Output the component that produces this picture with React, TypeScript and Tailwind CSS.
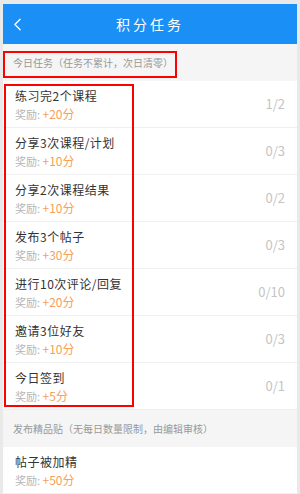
import { ChevronLeft } from "lucide-react";

const tasks = [
  { title: "练习完2个课程", reward: 20, progress: "1/2" },
  { title: "分享3次课程/计划", reward: 10, progress: "0/3" },
  { title: "分享2次课程结果", reward: 10, progress: "0/2" },
  { title: "发布3个帖子", reward: 30, progress: "0/3" },
  { title: "进行10次评论/回复", reward: 20, progress: "0/10" },
  { title: "邀请3位好友", reward: 10, progress: "0/3" },
  { title: "今日签到", reward: 5, progress: "0/1" },
];

const font = { fontFamily: '"Noto Sans CJK SC", "Liberation Sans", sans-serif' };

function TaskRow({ title, reward, progress }: { title: string; reward: number; progress?: string }) {
  return (
    <div className="flex h-[47px] items-center justify-between border-b border-[#f0f0f0] pl-[12px] pr-[12px]">
      <div className="flex flex-col">
        <span className="text-[12px] leading-[18px] tracking-[0.5px] text-[#333]">{title}</span>
        <span className="mt-[1px] text-[11px] leading-[16px] text-[#b5b5b5]">
          奖励: <span className="text-[12px] text-[#f7a05a]">+{reward}分</span>
        </span>
      </div>
      {progress && <span className="text-[13px] text-[#c4c4c4]">{progress}</span>}
    </div>
  );
}

export default function App() {
  return (
    <div className="relative h-[494px] w-[300px] overflow-hidden bg-[#e9e9e9] px-[3px] pt-[4px]" style={font}>
      <div className="bg-white">
        <div className="relative flex h-[40px] items-center justify-center bg-[#1a8ff5]">
          <ChevronLeft className="absolute left-[4px] top-[10px] h-[21px] w-[21px] text-white" strokeWidth={1.5} />
          <span className="text-[14px] tracking-[3px] text-white">积分任务</span>
        </div>
        <div className="flex h-[37px] items-center bg-[#f5f5f5] pl-[10px] text-[10px] text-[#999]">
          今日任务（任务不累计，次日清零）
        </div>
        {tasks.map((t) => (
          <TaskRow key={t.title} {...t} />
        ))}
        <div className="flex h-[37px] items-center bg-[#f5f5f5] pl-[10px] text-[10px] text-[#999]">
          发布精品贴（无每日数量限制，由编辑审核）
        </div>
        <TaskRow title="帖子被加精" reward={50} />
      </div>

      <div className="pointer-events-none absolute left-[3px] top-[51px] h-[27px] w-[174px] border-2 border-[#ff0000]" />
      <div className="pointer-events-none absolute left-[4px] top-[84px] h-[323px] w-[130px] border-2 border-[#ff0000]" />
    </div>
  );
}
